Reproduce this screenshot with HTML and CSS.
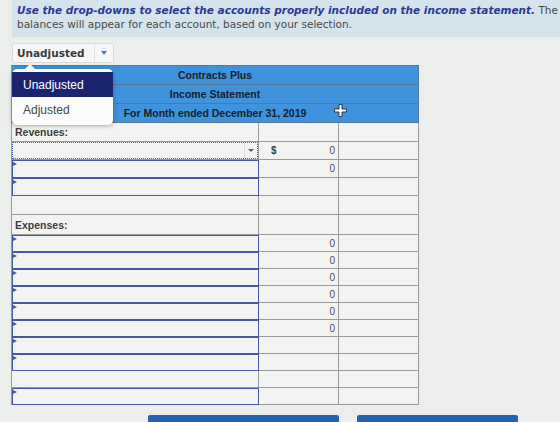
FILE: index.html
```html
<!DOCTYPE html>
<html lang="en">
<head>
  <meta charset="UTF-8">
  <meta name="viewport" content="width=device-width, initial-scale=1.0">
  <title>Income Statement Worksheet</title>
  <link rel="stylesheet" href="styles.css">
</head>
<body>
  <div class="page">
    <div class="instructions">
      <em>Use the drop-downs to select the accounts properly included on the income statement.</em> The correct<br>
      balances will appear for each account, based on your selection.
    </div>

    <div class="picker">
      <div class="mode-select">
        <span class="mode-label">Unadjusted</span>
        <span class="mode-caret"><i class="caret"></i></span>
      </div>
      <ul class="menu">
        <li class="menu-item active">Unadjusted</li>
        <li class="menu-item">Adjusted</li>
      </ul>
    </div>

    <div class="sheet">
      <table class="statement">
        <colgroup>
          <col class="col-account">
          <col class="col-amount">
          <col class="col-total">
        </colgroup>
        <thead>
          <tr><th colspan="3">Contracts Plus</th></tr>
          <tr><th colspan="3">Income Statement</th></tr>
          <tr><th colspan="3">For Month ended December 31, 2019</th></tr>
        </thead>
        <tbody class="revenues">
          <tr><td class="label">Revenues:</td><td></td><td></td></tr>
          <tr class="line">
            <td class="choice">
              <div class="choice-box"><span class="choice-text"></span><span class="choice-caret"><i class="caret small"></i></span></div>
            </td>
            <td class="num"><div class="amount"><span class="cur">$</span><span>0</span></div></td>
            <td></td>
          </tr>
          <tr class="line"><td class="field"><i class="marker"></i></td><td class="num">0</td><td></td></tr>
          <tr class="line"><td class="field"><i class="marker"></i></td><td></td><td></td></tr>
          <tr><td></td><td></td><td></td></tr>
          <tr class="subhead"><td class="label">Expenses:</td><td></td><td></td></tr>
        </tbody>
        <tbody class="expenses">
          <tr><td class="field"><i class="marker"></i></td><td class="num">0</td><td></td></tr>
          <tr><td class="field"><i class="marker"></i></td><td class="num">0</td><td></td></tr>
          <tr><td class="field"><i class="marker"></i></td><td class="num">0</td><td></td></tr>
          <tr><td class="field"><i class="marker"></i></td><td class="num">0</td><td></td></tr>
          <tr><td class="field"><i class="marker"></i></td><td class="num">0</td><td></td></tr>
          <tr><td class="field"><i class="marker"></i></td><td class="num">0</td><td></td></tr>
          <tr><td class="field"><i class="marker"></i></td><td></td><td></td></tr>
          <tr><td class="field"><i class="marker"></i></td><td></td><td></td></tr>
          <tr><td></td><td></td><td></td></tr>
          <tr><td class="field"><i class="marker"></i></td><td></td><td></td></tr>
        </tbody>
      </table>

      <!-- mouse pointer hovering the header -->
      <svg class="pointer" width="13" height="13" viewBox="0 0 13 13">
        <path d="M5 0.5h3v4.5h4.5v3h-4.5v4.5h-3v-4.5h-4.5v-3h4.5z" fill="#ffffff" stroke="#3a3a3a" stroke-width="1"/>
      </svg>
    </div>

    <div class="actions">
      <button class="btn btn-wide"></button>
      <button class="btn"></button>
    </div>
  </div>
</body>
</html>
```

FILE: styles.css
```css
body {
  margin: 0;
  background-color: #eceeec;
  font-family: "Liberation Sans", Arial, sans-serif;
  color: #333;
  overflow: hidden;
}
.page {
  padding-left: 12px;
}

/* instructions banner */
.instructions {
  height: 37px;
  box-sizing: border-box;
  padding: 3px 0 0 5px;
  background-color: #d4e3ec;
  font: 10.5px/14px "DejaVu Sans", Verdana, sans-serif;
  color: #4a4a4a;
  white-space: nowrap;
  overflow: hidden;
}
.instructions em {
  font-weight: bold;
  color: #2a3896;
}

/* balance mode dropdown */
.picker {
  position: relative;
  width: 102px;
  margin-top: 6px;
}
.mode-select {
  display: flex;
  align-items: center;
  height: 20px;
  box-sizing: border-box;
  background-color: #f7f7f7;
  border: 1px solid #dadada;
  border-radius: 2px;
  font: bold 10.5px "DejaVu Sans", Verdana, sans-serif;
  color: #3a3a3a;
}
.mode-label {
  flex: 1;
  padding-left: 4px;
}
.mode-caret {
  display: flex;
  align-items: center;
  justify-content: center;
  width: 18px;
  height: 100%;
  border-left: 1px solid #e0e0e0;
}
.caret {
  display: block;
  width: 0;
  height: 0;
  border-top: 4px solid #3b7fd0;
  border-left: 3.5px solid transparent;
  border-right: 3.5px solid transparent;
}
.caret.small {
  border-top-width: 3px;
  border-left-width: 3px;
  border-right-width: 3px;
  border-top-color: #3c5aa6;
}
.menu {
  position: absolute;
  top: calc(100% + 6px);
  left: 0;
  z-index: 2;
  width: 101px;
  margin: 0;
  padding: 3px 0;
  list-style: none;
  background-color: #fcfcfc;
  border-radius: 5px;
  box-shadow: 0 1px 4px rgba(0, 0, 0, 0.3);
}
.menu::before {
  content: "";
  position: absolute;
  top: -5px;
  left: 13px;
  border-bottom: 5px solid #fcfcfc;
  border-left: 5px solid transparent;
  border-right: 5px solid transparent;
}
.menu-item {
  height: 25px;
  line-height: 26px;
  padding-left: 11px;
  font-size: 12px;
  color: #474747;
}
.menu-item.active {
  background-color: #1c2470;
  color: #ffffff;
}

/* statement grid: separate borders so every line lands on a whole pixel */
.sheet {
  position: relative;
  margin-top: 2px;
}
.statement {
  width: 407px;
  margin-left: -1px;
  border-collapse: separate;
  border-spacing: 0;
  border-top: 1px solid #56779a;
  border-left: 1px solid #989b9e;
  table-layout: fixed;
  font-size: 10.5px;
}
.col-account {
  width: 247px;
}
.col-amount,
.col-total {
  width: 80px;
}
.statement th {
  height: 18px;
  padding: 0;
  background-color: #3e93dc;
  border-right: 1px solid #56779a;
  border-bottom: 1px solid #56779a;
  font-weight: bold;
  color: #16202e;
  text-align: center;
}
.statement td {
  padding: 0;
  background-color: #f3f4f2;
  border-right: 1px solid #989b9e;
  border-bottom: 1px solid #989b9e;
  vertical-align: middle;
}
.revenues td {
  height: 18px;
}
.revenues .line td {
  height: 17px;
}
.revenues .subhead td {
  height: 19px;
}
.expenses td {
  height: 16px;
}
.statement td.label {
  padding-left: 3px;
  font-weight: bold;
  color: #3c3c3c;
}
.statement td.num {
  padding: 0 3px;
  text-align: right;
  font-size: 10px;
  color: #505050;
}
.amount {
  display: flex;
  justify-content: space-between;
  padding-left: 9px;
}
.cur {
  font-weight: bold;
  color: #3c3c3c;
}
.statement td.field {
  vertical-align: top;
  border-right-color: #44599f;
  border-bottom-color: #44599f;
  box-shadow: inset 1px 1px 0 #44599f;
}
.marker {
  display: block;
  width: 0;
  height: 0;
  margin-top: 2px;
  margin-left: 1px;
  border-left: 4px solid #3d5bb0;
  border-top: 2.5px solid transparent;
  border-bottom: 2.5px solid transparent;
}
.choice-box {
  display: flex;
  height: 17px;
  box-sizing: border-box;
  border: 1px dotted #4560aa;
}
.choice-text {
  flex: 1;
}
.choice-caret {
  display: flex;
  align-items: center;
  justify-content: center;
  width: 12px;
  border-left: 1px dotted #b9c3d6;
}
.pointer {
  position: absolute;
  top: 39px;
  left: 322px;
}

/* action buttons, cut off at the bottom */
.actions {
  display: flex;
  gap: 18px;
  margin-top: 10px;
  padding-left: 136px;
}
.btn {
  width: 161px;
  height: 20px;
  padding: 0;
  background-color: #2462b6;
  border: none;
  border-radius: 2px;
}
.btn-wide {
  width: 191px;
}
```
